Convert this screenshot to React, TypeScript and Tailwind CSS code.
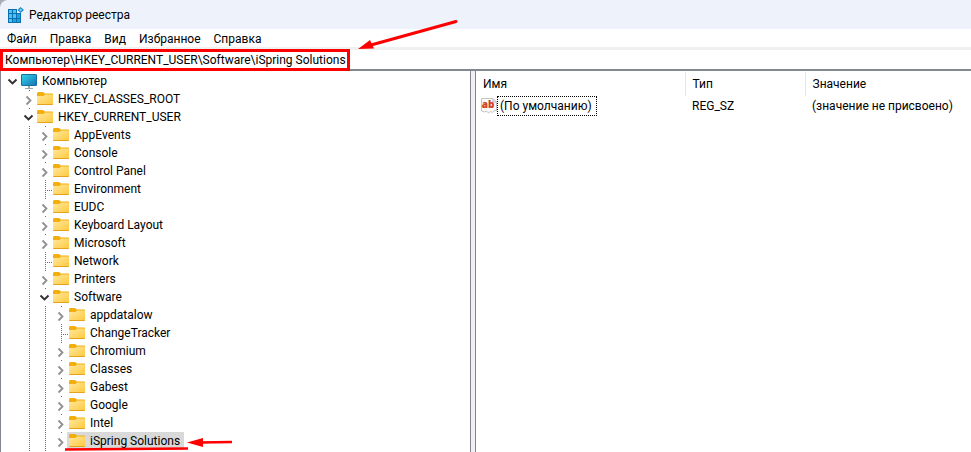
import { useState } from 'react';

interface TreeItem {
  name: string;
  depth: number;
  state: 'open' | 'closed' | 'leaf';
  selected?: boolean;
}

interface RegistryValue {
  name: string;
  type: string;
  data: string;
}

const menuItems = ['Файл', 'Правка', 'Вид', 'Избранное', 'Справка'];

const treeItems: TreeItem[] = [
  { name: 'Компьютер', depth: 0, state: 'open' },
  { name: 'HKEY_CLASSES_ROOT', depth: 1, state: 'closed' },
  { name: 'HKEY_CURRENT_USER', depth: 1, state: 'open' },
  { name: 'AppEvents', depth: 2, state: 'closed' },
  { name: 'Console', depth: 2, state: 'closed' },
  { name: 'Control Panel', depth: 2, state: 'closed' },
  { name: 'Environment', depth: 2, state: 'leaf' },
  { name: 'EUDC', depth: 2, state: 'closed' },
  { name: 'Keyboard Layout', depth: 2, state: 'closed' },
  { name: 'Microsoft', depth: 2, state: 'closed' },
  { name: 'Network', depth: 2, state: 'leaf' },
  { name: 'Printers', depth: 2, state: 'closed' },
  { name: 'Software', depth: 2, state: 'open' },
  { name: 'appdatalow', depth: 3, state: 'closed' },
  { name: 'ChangeTracker', depth: 3, state: 'leaf' },
  { name: 'Chromium', depth: 3, state: 'closed' },
  { name: 'Classes', depth: 3, state: 'closed' },
  { name: 'Gabest', depth: 3, state: 'closed' },
  { name: 'Google', depth: 3, state: 'closed' },
  { name: 'Intel', depth: 3, state: 'closed' },
  { name: 'iSpring Solutions', depth: 3, state: 'closed', selected: true },
];

const values: RegistryValue[] = [
  { name: '(По умолчанию)', type: 'REG_SZ', data: '(значение не присвоено)' },
];

const RegeditIcon = () => (
  <svg className="h-4 w-4 shrink-0" viewBox="0 0 16 16" aria-hidden="true">
    <path d="M0 2h9v4h4v10H0z" fill="#0a6fb0" />
    <path
      d="M1 3h3v3H1zM5 3h3v3H5zM1 7h3v4H1zM5 7h3v4H5zM1 12h3v3H1z"
      fill="#4fc3f0"
    />
    <path d="M9 7h3v4H9zM5 12h3v3H5zM9 12h3v3H9z" fill="#1fa0e0" />
    <path d="M12.500 0l3.500 3-3.500 3-3-3z" fill="#1486c4" />
    <path d="M12.500 1.500l1.800 1.500-1.800 1.500-1.500-1.500z" fill="#7fd6f7" />
  </svg>
);

const ComputerIcon = () => (
  <svg className="h-[18px] w-4 shrink-0" viewBox="0 0 16 18" aria-hidden="true">
    <defs>
      <linearGradient id="screen" x1="0" y1="0" x2="1" y2="1">
        <stop offset="0" stopColor="#35d6e8" />
        <stop offset="1" stopColor="#1272b4" />
      </linearGradient>
    </defs>
    <rect x="0.500" y="2.500" width="15" height="11" rx="0.500" fill="url(#screen)" stroke="#1a6f9e" />
    <path d="M7 14h2v2h3v1H4v-1h3z" fill="#9aa7b0" />
  </svg>
);

const FolderIcon = () => (
  <svg className="h-[18px] w-4 shrink-0" viewBox="0 0 16 18" aria-hidden="true">
    <defs>
      <linearGradient id="folder" x1="0" y1="0" x2="1" y2="1">
        <stop offset="0" stopColor="#ffe8a0" />
        <stop offset="1" stopColor="#ffc83c" />
      </linearGradient>
    </defs>
    <path d="M0 3.500Q0 2 1.200 2H6l2 1.500h7.200q.8 0 .8 1V8H0z" fill="#f2ae0c" />
    <path d="M0 6h6.500L8 4.500h7.200q.8 0 .8.800V14q0 1-1 1H1q-1 0-1-1z" fill="url(#folder)" />
    <path d="M.300 14.500h15.400" stroke="#e5a21c" />
  </svg>
);

const StringIcon = () => (
  <svg className="h-4 w-4 shrink-0" viewBox="0 0 16 16" aria-hidden="true">
    <path
      d="M.500.500H12L15.500 4v9l-2-1-2 2.500-2-1-2 1.500-2-2-2 1-3-1z"
      fill="#fafafa"
      stroke="#c4c4c4"
    />
    <path d="M12 .500V4h3.500" fill="none" stroke="#b4b4b4" />
    <text
      x="7"
      y="10"
      textAnchor="middle"
      className="font-['Open_Sans',sans-serif]"
      fontSize="10"
      fontWeight="800"
      fill="#d2401e"
    >
      ab
    </text>
  </svg>
);

const Guide = () => (
  <svg className="h-[18px] w-4 shrink-0" aria-hidden="true">
    <path d="M8.500 0v18" stroke="#6e6e6e" strokeDasharray="1 1" />
  </svg>
);

const Expander = ({ item }: { item: TreeItem }) => {
  if (item.state === 'leaf') {
    return (
      <svg className="h-[18px] w-4 shrink-0" aria-hidden="true">
        <path d="M8.500 0v18M10 10.500h6" stroke="#6e6e6e" strokeDasharray="1 1" />
      </svg>
    );
  }
  return (
    <button type="button" aria-label={item.name} className="h-[18px] w-4 shrink-0">
      <svg className="h-[18px] w-4" fill="none" aria-hidden="true">
        {item.depth > 0 && <path d="M8 .500h1" stroke="#6e6e6e" />}
        {item.state === 'open' ? (
          <path d="M3.500 7.500l4 4 4-4" stroke="#303030" strokeWidth="1.900" />
        ) : (
          <path d="M5.500 6.500l4 4-4 4" stroke="#909090" strokeWidth="1.800" />
        )}
      </svg>
    </button>
  );
};

const TreeRow = ({ item }: { item: TreeItem }) => (
  <li className="flex h-[18px]">
    {/* the root level has no guide of its own */}
    {item.depth > 0 && <span className="w-4 shrink-0" />}
    {Array.from({ length: Math.max(item.depth - 1, 0) }).map((_, i) => (
      <Guide key={i} />
    ))}
    <Expander item={item} />
    <div className="relative flex">
      {item.selected && (
        <span className="absolute inset-y-0 -left-0.5 -right-1 bg-[#d9d9d9]" />
      )}
      <span className="relative flex gap-[5px]">
        {item.depth === 0 ? <ComputerIcon /> : <FolderIcon />}
        <span className="whitespace-nowrap leading-[18px]">{item.name}</span>
      </span>
      {item.selected && (
        <svg
          className="absolute -left-1 top-0 h-5 w-[168px]"
          viewBox="0 0 168 20"
          fill="none"
          aria-hidden="true"
        >
          <path d="M0 17.500L60 17l63-.500" stroke="#f00" strokeWidth="2.500" />
          <path d="M134 10.500l33-.500" stroke="#f00" strokeWidth="2.500" />
          <path d="M122 10.500l16-4.500v9z" fill="#f00" />
        </svg>
      )}
    </div>
  </li>
);

const App = () => {
  const [path, setPath] = useState(
    'Компьютер\\HKEY_CURRENT_USER\\Software\\iSpring Solutions'
  );

  return (
    <main className="flex h-screen flex-col overflow-hidden bg-white font-['Roboto','Noto_Sans',sans-serif] text-xs text-black">
      <div className="bg-[#a8acb4]">
        <header className="flex h-[29px] items-center gap-[5px] rounded-tl-lg bg-[#eef3fb] px-2">
          <RegeditIcon />
          <h1>Редактор реестра</h1>
        </header>
      </div>

      <nav className="flex h-[18px] shrink-0 gap-[13px] px-[7px]">
        {menuItems.map(item => (
          <button key={item} type="button" className="leading-5">
            {item}
          </button>
        ))}
      </nav>

      <div className="relative flex h-6 shrink-0 border-b-2 border-t-[3px] border-b-[#828790] border-t-[#f0f0f0]">
        <input
          aria-label="Адрес"
          value={path}
          onChange={e => setPath(e.target.value)}
          className="min-w-0 flex-1 px-[5px] outline-none"
        />
        {/* Callout round the address and its arrow */}
        <span className="pointer-events-none absolute -top-px left-0 z-10 h-[22px] w-[350px] border-[3px] border-[#f00]" />
        <svg
          className="pointer-events-none absolute -top-8 left-[356px] h-8 w-[104px]"
          viewBox="0 0 104 32"
          aria-hidden="true"
        >
          <path d="M15 27L100 3.500" stroke="#f00" strokeWidth="3" strokeLinecap="round" />
          <path d="M2 31l12-9 4 8.500z" fill="#f00" />
        </svg>
      </div>

      <div className="flex min-h-0 flex-1">
        <section className="w-[471px] shrink-0 overflow-hidden border-x border-[#828790] pl-1 pt-px">
          <ul>
            {treeItems.map(item => (
              <TreeRow key={item.name} item={item} />
            ))}
          </ul>
          <div className="flex pl-4">
            <Guide />
            <Guide />
          </div>
        </section>

        <div className="w-1 shrink-0 bg-[#f0f0f0]" />

        <section className="min-w-0 flex-1 overflow-hidden border-l border-[#828790] pt-px">
          <table className="w-full table-fixed border-collapse text-left">
            <colgroup>
              <col className="w-[209px]" />
              <col className="w-[120px]" />
              <col />
            </colgroup>
            <thead>
              <tr className="h-6">
                <th className="border-r border-[#e5e5e5] pl-[7px] font-normal">Имя</th>
                <th className="border-r border-[#e5e5e5] pl-[7px] font-normal">Тип</th>
                <th className="pl-[7px] font-normal">Значение</th>
              </tr>
            </thead>
            <tbody>
              {values.map(value => (
                <tr key={value.name} className="h-5">
                  <td className="p-0 pl-[5px]">
                    <span className="flex items-center">
                      <StringIcon />
                      <span className="border border-dotted border-black py-px pl-0.5 pr-1 leading-4">
                        {value.name}
                      </span>
                    </span>
                  </td>
                  <td className="p-0 pl-[7px]">{value.type}</td>
                  <td className="whitespace-nowrap p-0 pl-[7px]">{value.data}</td>
                </tr>
              ))}
            </tbody>
          </table>
        </section>
      </div>
    </main>
  );
};

export default App;
